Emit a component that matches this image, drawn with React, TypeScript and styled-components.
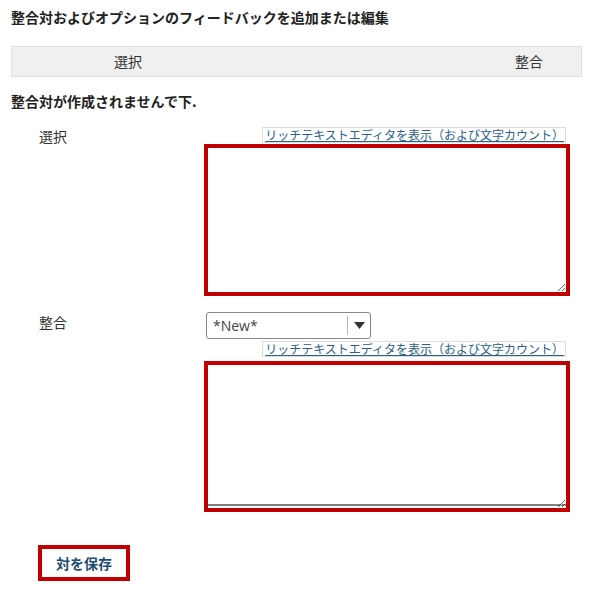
import React from "react";
import styled, { createGlobalStyle } from "styled-components";

const COLORS = {
  TEXT: "#222222",
  LABEL: "#333333",
  RED: "#c00000",
  LINK: "#2b5f8a",
  HEADER_BG: "#f0f0f0",
  HEADER_BORDER: "#e0e0e0",
};

type AreaPropsType = {
  hasBottomLine?: boolean;
};

const GlobalStyle = createGlobalStyle`
  body {
    margin: 0;
    background: #ffffff;
    font-family: "Noto Sans CJK JP", "Noto Sans", sans-serif;
    color: ${COLORS.TEXT};
  }
`;

const Page = styled.div`
  width: 571px;
  padding: 7px 9px 0 11px;
`;

const Title = styled.h3`
  margin: 0;
  font-size: 14px;
  font-weight: bold;
  line-height: 20px;
`;

const HeaderRow = styled.div`
  display: grid;
  grid-template-columns: 499px 1fr;
  margin-top: 19px;
  height: 29px;
  background: ${COLORS.HEADER_BG};
  border: 1px solid ${COLORS.HEADER_BORDER};
  font-size: 14px;
  line-height: 29px;
  color: ${COLORS.LABEL};
`;

const HeaderCell = styled.div<{ pad: number }>`
  padding-left: ${({ pad }) => pad}px;
`;

const Message = styled.div`
  margin-top: 14px;
  font-size: 14px;
  font-weight: bold;
  line-height: 20px;
`;

const FormRow = styled.div`
  display: grid;
  grid-template-columns: 193px 366px;
  margin-top: 16px;
`;

const Label = styled.div`
  padding-left: 28px;
  font-size: 14px;
  line-height: 20px;
  color: ${COLORS.LABEL};
`;

const Field = styled.div`
  display: flex;
  flex-direction: column;
  align-items: flex-start;
`;

const EditorLink = styled.a`
  align-self: flex-end;
  margin-right: 4px;
  height: 14px;
  padding: 0 1px 0 2px;
  border: 1px solid #dddddd;
  font-size: 12px;
  line-height: 14px;
  color: ${COLORS.LINK};
  text-decoration: underline;
  white-space: nowrap;
  cursor: pointer;
`;

const Area = styled.textarea<AreaPropsType>`
  box-sizing: border-box;
  width: 366px;
  height: 152px;
  margin: 1px 0 0;
  border: 4px solid ${COLORS.RED};
  box-shadow: ${({ hasBottomLine }) =>
    hasBottomLine ? "inset 0 -2px 0 #ffffff, inset 0 -4px 0 #808080" : "none"};
  outline: none;
  resize: vertical;
  font-family: inherit;
`;

const Select = styled.div`
  box-sizing: border-box;
  display: flex;
  align-items: center;
  margin-left: 2px;
  width: 165px;
  height: 27px;
  border: 1px solid #888888;
  border-radius: 3px;
  font-family: "Open Sans", "Noto Sans", sans-serif;
  font-size: 14px;
  color: #444444;
`;

const SelectValue = styled.span`
  flex: 1;
  padding-left: 6px;
`;

const SelectArrow = styled.span`
  display: flex;
  align-items: center;
  justify-content: center;
  width: 22px;
  height: 19px;
  border-left: 1px solid #bbbbbb;
`;

const SaveButton = styled.button`
  box-sizing: border-box;
  margin: 33px 0 12px 27px;
  width: 92px;
  height: 36px;
  border: 4px solid ${COLORS.RED};
  background: #ffffff;
  font-family: "Noto Sans CJK JP", sans-serif;
  font-size: 14px;
  font-weight: bold;
  color: #1d4d74;
  cursor: pointer;
`;

const LINK_TEXT = "リッチテキストエディタを表示（および文字カウント）";

const App = () => {
  return (
    <Page>
      <GlobalStyle />
      <Title>整合対およびオプションのフィードバックを追加または編集</Title>
      <HeaderRow>
        <HeaderCell pad={102}>選択</HeaderCell>
        <HeaderCell pad={4}>整合</HeaderCell>
      </HeaderRow>
      <Message>整合対が作成されませんで下.</Message>
      <FormRow>
        <Label style={{ marginTop: -1 }}>選択</Label>
        <Field>
          <EditorLink>{LINK_TEXT}</EditorLink>
          <Area />
        </Field>
      </FormRow>
      <FormRow>
        <Label>整合</Label>
        <Field>
          <Select>
            <SelectValue>*New*</SelectValue>
            <SelectArrow>
              <svg width="11" height="7" viewBox="0 0 11 7">
                <path d="M0 0 H11 L5.5 7 Z" fill="#333333" />
              </svg>
            </SelectArrow>
          </Select>
          <EditorLink style={{ marginTop: 2 }}>{LINK_TEXT}</EditorLink>
          <Area hasBottomLine style={{ marginTop: 4, height: 151 }} />
        </Field>
      </FormRow>
      <SaveButton>対を保存</SaveButton>
    </Page>
  );
};

export default App;
